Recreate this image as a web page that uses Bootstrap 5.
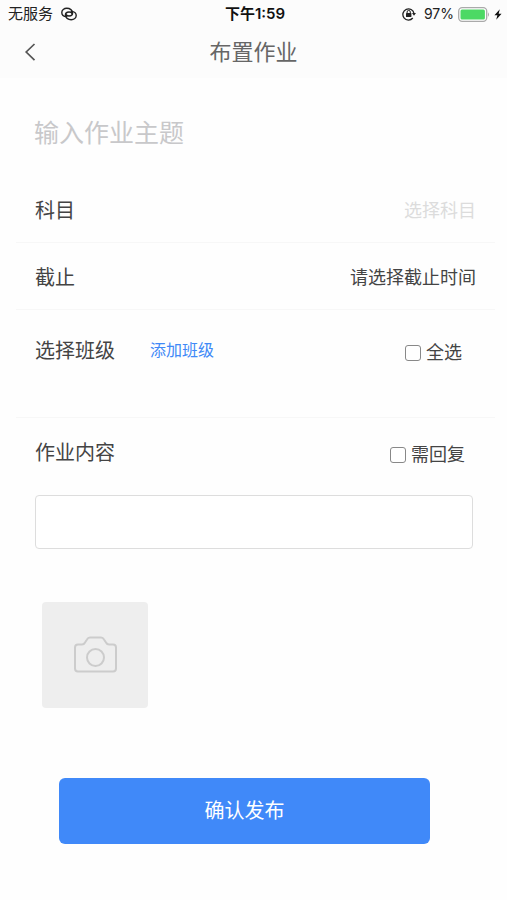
<!DOCTYPE html>
<html lang="zh-CN">
<head>
<meta charset="utf-8">
<meta name="viewport" content="width=device-width, initial-scale=1">
<title>布置作业</title>
<link href="https://cdn.jsdelivr.net/npm/bootstrap@5.3.0/dist/css/bootstrap.min.css" rel="stylesheet">
<style>
  body { font-family: "Liberation Sans", "Noto Sans CJK SC", sans-serif; color: #444; background: #fefefe; }
  .top-area { background: #fcfcfc; }
  .status-bar { height: 28px; font-family: Inter, "Noto Sans CJK SC", sans-serif; font-size: 15px; line-height: 20px; color: #222; padding: 0 5px 0 8px; }
  .status-side { flex: 1 1 0; gap: 8px; }
  .status-time { font-weight: 600; color: #111; }
  .battery-group { gap: 4px; font-size: 14px; }
  .title-bar { height: 50px; padding: 0 20px; }
  .title-bar h1 { font-size: 22px; line-height: 32px; color: #666; }
  .title-side { width: 24px; }
  .topic-row { height: 98px; padding: 12px 36px 0 34px; }
  .topic-input { font-size: 25px; line-height: 36px; color: #444; }
  .topic-input::placeholder { color: #c8c8ca; opacity: 1; }
  .form-row { margin: 0 12px 0 16px; padding: 4px 19px 0 19px; height: 67px; border-bottom: 1px solid #f7f7f7; }
  .row-label { font-size: 20px; line-height: 30px; }
  .picker { font-size: 18px; line-height: 26px; color: #444; appearance: none; background: transparent; text-align: right; text-align-last: right; }
  .picker:invalid { color: #dcdcdc; }
  .class-row { height: 108px; padding-top: 26px; }
  .add-link { font-size: 16px; line-height: 30px; margin-left: 35px; color: #4089f7; }
  .tick { gap: 5px; font-size: 18px; line-height: 26px; padding-top: 4px; }
  .tick .form-check-input { width: 16px; height: 16px; border: 1px solid #888; border-radius: 3px; }
  .tick-all { margin-right: 14px; }
  .content-area { padding: 20px 34px 0 35px; }
  .content-box { height: 54px; margin-top: 27px; border: 1px solid #ddd; border-radius: 4px; resize: none; }
  .photo-btn { width: 106px; height: 106px; margin: 53px 0 0 7px; background: #eee; border-radius: 4px; }
  .submit-area { padding: 70px 77px 0 59px; }
  .submit-btn { height: 66px; font-size: 20px; color: #fff; background: #4089f9; border-radius: 6px; }
</style>
</head>
<body>
<header class="top-area">
  <div class="status-bar d-flex align-items-center">
    <div class="status-side d-flex align-items-center">
      <span>无服务</span>
      <svg width="16" height="14" viewBox="0 0 16 14" fill="none" stroke="#222" stroke-width="1.4" stroke-linecap="round" aria-hidden="true"><path d="M5.600 9.600C2.500 9.300.8 7.600.8 5.400.8 3 3 1.300 5.800 1.300c3.200 0 5.800 2 5.800 4.500 0 2-1.600 3.200-3.600 3.200-1.800 0-3-.8-3.300-2"/><path d="M10.400 4.400c3.100.3 4.800 2 4.800 4.200 0 2.400-2.200 4.100-5 4.100-3.200 0-5.800-2-5.800-4.500 0-2 1.600-3.200 3.600-3.200 1.800 0 3 .8 3.300 2"/></svg>
    </div>
    <span class="status-time">下午1:59</span>
    <div class="status-side d-flex align-items-center justify-content-end">
      <svg width="14" height="14" viewBox="0 0 14 14" aria-hidden="true"><path d="M10.800 11A5.600 5.600 0 1 1 12 6.500" fill="none" stroke="#222" stroke-width="1.3"/><path d="M10 6h4l-2 2.800z" fill="#222"/><rect x="4" y="6" width="5.400" height="4" rx=".5" fill="#222"/><path d="M5.100 6V5a1.600 1.600 0 0 1 3.200 0v1" fill="none" stroke="#222"/></svg>
      <div class="battery-group d-flex align-items-center">
        <span>97%</span>
        <svg width="32" height="15" viewBox="0 0 32 15" aria-hidden="true"><rect x=".7" y=".7" width="28" height="13.600" rx="3.500" fill="#fff" stroke="#aaa" stroke-width="1.300"/><rect x="2.500" y="2.500" width="24.400" height="10" rx="1.500" fill="#4cd964"/><path d="M30 5.200q2 2.300 0 4.600z" fill="#aaa"/></svg>
        <svg width="8" height="13" viewBox="0 0 9 13" aria-hidden="true"><path d="M6.500.500.500 7.300h3.300L2.500 12.500 8.500 5.600H5.200z" fill="#111"/></svg>
      </div>
    </div>
  </div>
  <nav class="title-bar d-flex align-items-center justify-content-between" aria-label="页面导航">
    <a class="title-side d-flex" href="#" aria-label="返回"><svg width="20" height="20" viewBox="0 0 20 20" fill="none" stroke="#555" stroke-width="1.700" aria-hidden="true"><path d="M14.500 1 6.200 9l8.300 8.200"/></svg></a>
    <h1 class="fw-normal mb-0">布置作业</h1>
    <span class="title-side"></span>
  </nav>
</header>
<main>
  <form>
    <div class="topic-row d-flex align-items-center">
      <input class="topic-input form-control border-0 bg-transparent p-0" type="text" placeholder="输入作业主题" aria-label="作业主题">
    </div>
    <div class="form-row d-flex align-items-center justify-content-between">
      <label class="row-label" for="subject">科目</label>
      <select class="picker border-0 p-0" id="subject" required><option value="">选择科目</option></select>
    </div>
    <div class="form-row d-flex align-items-center justify-content-between">
      <label class="row-label" for="deadline">截止</label>
      <button class="picker border-0 p-0" id="deadline" type="button">请选择截止时间</button>
    </div>
    <div class="form-row class-row d-flex align-items-start">
      <span class="row-label">选择班级</span>
      <a class="add-link text-decoration-none" href="#">添加班级</a>
      <div class="tick tick-all d-flex align-items-center ms-auto">
        <input class="form-check-input m-0" type="checkbox" id="all"><label for="all">全选</label>
      </div>
    </div>
    <div class="content-area">
      <div class="d-flex align-items-start">
        <label class="row-label" for="content">作业内容</label>
        <div class="tick d-flex align-items-center ms-auto me-2">
          <input class="form-check-input m-0" type="checkbox" id="reply"><label for="reply">需回复</label>
        </div>
      </div>
      <textarea class="content-box form-control" id="content" rows="1"></textarea>
      <button class="photo-btn border-0 p-0 d-flex align-items-center justify-content-center" type="button" aria-label="添加照片">
        <svg width="44" height="38" viewBox="0 0 44 38" fill="none" stroke="#ccc" stroke-width="2" stroke-linejoin="round" aria-hidden="true"><path d="M5 8.500h4q2 0 3-2l2-3q1-2 3-2h11q2 0 3 2l2 3q1 2 3 2h4q3 0 3 3v21q0 3-3 3H5q-3 0-3-3v-21q0-3 3-3z"/><circle cx="22.500" cy="21.500" r="8.500"/></svg>
      </button>
    </div>
    <div class="submit-area">
      <button class="submit-btn btn w-100 border-0" type="submit">确认发布</button>
    </div>
  </form>
</main>
<script src="https://cdn.jsdelivr.net/npm/bootstrap@5.3.0/dist/js/bootstrap.bundle.min.js"></script>
</body>
</html>
